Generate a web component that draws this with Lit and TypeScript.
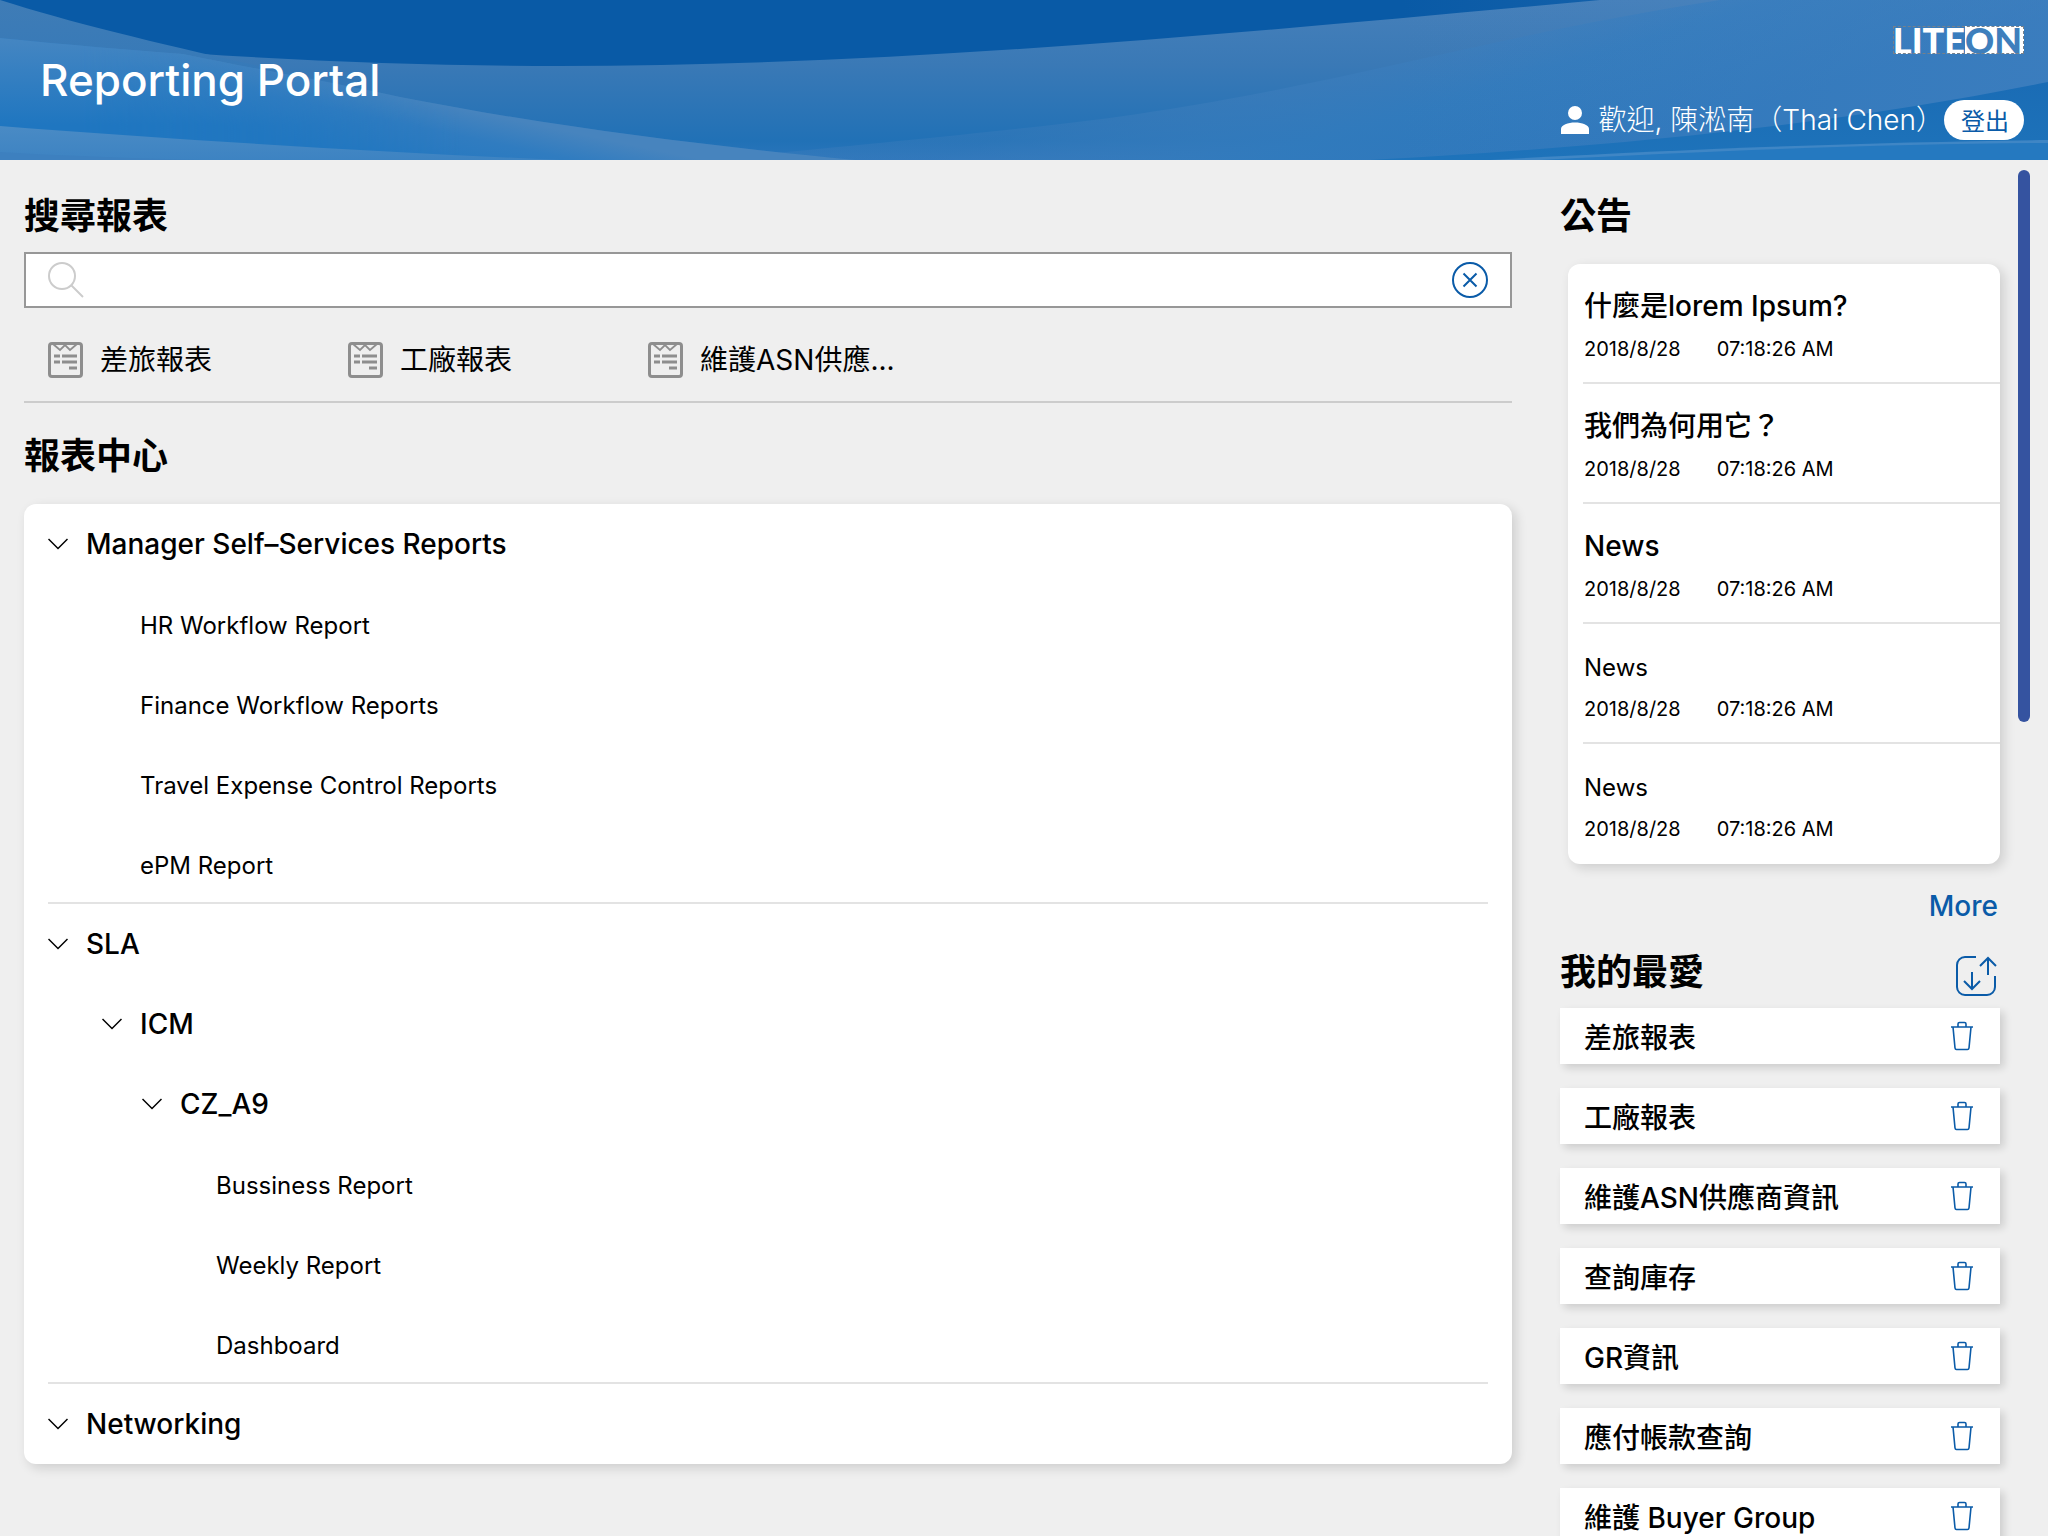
import { LitElement, css, html, nothing, svg } from "lit";
import { customElement, state } from "lit/decorators.js";

interface ReportNode {
  name: string;
  children?: ReportNode[];
}

interface Announcement {
  title: string;
  date: string;
  time: string;
  unread: boolean;
}

const SHORTCUTS = ["差旅報表", "工廠報表", "維護ASN供應..."];

const REPORTS: ReportNode[] = [
  {
    name: "Manager Self–Services Reports",
    children: [
      { name: "HR Workflow Report" },
      { name: "Finance Workflow Reports" },
      { name: "Travel Expense Control Reports" },
      { name: "ePM Report" },
    ],
  },
  {
    name: "SLA",
    children: [
      {
        name: "ICM",
        children: [
          {
            name: "CZ_A9",
            children: [{ name: "Bussiness Report" }, { name: "Weekly Report" }, { name: "Dashboard" }],
          },
        ],
      },
    ],
  },
  { name: "Networking", children: [] },
];

const stamp = { date: "2018/8/28", time: "07:18:26 AM" };

const ANNOUNCEMENTS: Announcement[] = [
  { title: "什麼是lorem Ipsum?", ...stamp, unread: true },
  { title: "我們為何用它？", ...stamp, unread: true },
  { title: "News", ...stamp, unread: true },
  { title: "News", ...stamp, unread: false },
  { title: "News", ...stamp, unread: false },
];

const FAVORITES = [
  "差旅報表",
  "工廠報表",
  "維護ASN供應商資訊",
  "查詢庫存",
  "GR資訊",
  "應付帳款查詢",
  "維護 Buyer Group",
];

const waves = html`
  <svg class="waves" viewBox="0 0 2048 160" preserveAspectRatio="none" aria-hidden="true">
    <defs>
      <linearGradient id="mid" x1="0" y1="0" x2="0" y2="1">
        <stop offset="0" stop-color="#4680ba" />
        <stop offset="0.4" stop-color="#3a79b6" />
        <stop offset="0.88" stop-color="#2171b6" />
        <stop offset="1" stop-color="#2a75bb" />
      </linearGradient>
      <linearGradient id="wash" gradientUnits="userSpaceOnUse" x1="1500" y1="-20" x2="1560" y2="170">
        <stop offset="0" stop-color="#4580bd" stop-opacity="0.3" />
        <stop offset="0.5" stop-color="#327bbd" stop-opacity="0.9" />
        <stop offset="1" stop-color="#2d77bc" />
      </linearGradient>
      <linearGradient id="glow" x1="0" y1="0" x2="1" y2="0">
        <stop offset="0" stop-color="#4b84c0" stop-opacity="0" />
        <stop offset="1" stop-color="#4b84c0" stop-opacity="0.75" />
      </linearGradient>
      <linearGradient id="corner" x1="0" y1="0" x2="0" y2="1">
        <stop offset="0" stop-color="#3f7cb6" />
        <stop offset="1" stop-color="#2a76bb" />
      </linearGradient>
      <linearGradient id="sweep" gradientUnits="userSpaceOnUse" x1="440" y1="104" x2="426" y2="170">
        <stop offset="0" stop-color="#4784be" />
        <stop offset="0.4" stop-color="#307cc0" />
        <stop offset="1" stop-color="#2378c1" />
      </linearGradient>
      <linearGradient id="veil" gradientUnits="userSpaceOnUse" x1="0" y1="38" x2="0" y2="125">
        <stop offset="0" stop-color="#4586c2" />
        <stop offset="1" stop-color="#1f76c0" />
      </linearGradient>
      <linearGradient id="fade" gradientUnits="userSpaceOnUse" x1="80" y1="0" x2="460" y2="0">
        <stop offset="0" stop-color="#fff" />
        <stop offset="1" stop-color="#000" />
      </linearGradient>
      <mask id="fade-mask" maskUnits="userSpaceOnUse" x="0" y="0" width="2048" height="160">
        <rect width="2048" height="160" fill="url(#fade)" />
      </mask>
      <linearGradient id="base" gradientUnits="userSpaceOnUse" x1="0" y1="125" x2="0" y2="160">
        <stop offset="0" stop-color="#4a8bc5" />
        <stop offset="1" stop-color="#3d83c2" />
      </linearGradient>
      <linearGradient id="deep" x1="0" y1="0" x2="0" y2="1">
        <stop offset="0" stop-color="#1a6cb5" />
        <stop offset="1" stop-color="#1e73ba" />
      </linearGradient>
    </defs>
    <rect width="2048" height="160" fill="#095aa6" />
    <path d="M0 38C180 55 370 66 560 66C900 66 1250 32 1600 0H2048V160H0Z" fill="url(#mid)" />
    <path d="M1024 128C1300 100 1460 40 1720 0H2048V160H700C830 148 930 138 1024 128Z" fill="url(#wash)" />
    <path d="M1400 0H2048V160H1400Z" fill="url(#glow)" opacity="0.6" />
    <path d="M0 0C100 32 240 62 400 97C560 128 700 145 855 160H0Z" fill="url(#corner)" />
    <path d="M0 38C70 45 130 50 183 54C250 68 320 80 400 97C560 128 700 145 855 160H0Z" fill="url(#sweep)" />
    <path
      d="M0 38C70 45 130 50 183 54C250 68 320 80 400 97C560 128 700 145 855 160H0Z"
      fill="url(#veil)"
      mask="url(#fade-mask)"
    />
    <path d="M0 126C180 140 380 152 560 160H0Z" fill="url(#base)" />
    <path d="M0 152C70 156 130 158 200 160H0Z" fill="#3d80bf" />
    <path d="M1370 160C1650 145 1860 120 2048 82V160Z" fill="url(#deep)" />
    <path d="M1490 160C1700 148 1880 142 2048 140V160Z" fill="#3f86c5" />
    <path d="M1540 160C1740 149 1900 144 2048 143V160Z" fill="#2579c0" />
  </svg>
`;

const icon = (name: string, width: number, height: number, body: unknown) => html`
  <svg class="icon ${name}" width=${width} height=${height} viewBox="0 0 ${width} ${height}" aria-hidden="true">${body}</svg>
`;

const personIcon = icon(
  "person",
  28,
  28,
  svg`<circle cx="14" cy="7" r="7" /><path d="M0 28V23C0 19 7 16.500 14 16.500S28 19 28 23V28Z" />`,
);

const searchIcon = icon("search", 36, 36, svg`<circle cx="14" cy="14" r="13" /><path d="M23.500 23.500L35 35" />`);

const clearIcon = icon("clear", 36, 36, svg`<circle cx="18" cy="18" r="17" /><path d="M11.500 11.500L24.500 24.500M24.500 11.500L11.500 24.500" />`);

const reportIcon = icon(
  "report",
  36,
  36,
  svg`<rect x="1.500" y="1.500" width="32" height="33" rx="2.500" stroke-width="3" />
    <path d="M5 2L12 8L17 3L22 8L29 2" stroke-width="1.800" />
    <path d="M6 14H12M14 14H29M6 20H12M14 20H29M21 26H29" stroke-width="3" />`,
);

const chevronIcon = icon("chevron", 20, 12, svg`<path d="M0.500 1L10 10.500L19.500 1" />`);

const sortIcon = icon(
  "sort",
  42,
  42,
  svg`<path d="M20 2H9A8 8 0 0 0 1 10V32A8 8 0 0 0 9 40H31A8 8 0 0 0 39 32V21" />
    <path d="M16 17V34M8 26L16 34L24 26M32 20V3M24 11L32 3L40 11" />`,
);

const trashIcon = icon(
  "trash",
  24,
  30,
  svg`<path d="M1 6H23M3 6L5 27Q5.200 28.500 6.500 28.500H17.500Q18.800 28.500 19 27L21 6M8 6V3Q8 1.500 9.500 1.500H14.500Q16 1.500 16 3V6" />`,
);

@customElement("app-root")
export class AppRoot extends LitElement {
  static styles = css`
    :host {
      display: block;
      --blue: #0a5ba8;
      --line: #e3e3e3;
      font-family: Inter, "Noto Sans CJK TC", sans-serif;
      color: #000;
      background: #efefef;
    }
    * {
      box-sizing: border-box;
    }
    h1,
    h2,
    p,
    ul {
      margin: 0;
      padding: 0;
    }
    ul {
      list-style: none;
    }
    a {
      color: inherit;
      text-decoration: none;
    }
    button {
      font: inherit;
      color: inherit;
      border: 0;
      padding: 0;
      background: none;
      cursor: pointer;
    }
    .icon {
      display: block;
      flex: none;
      fill: none;
      stroke: currentColor;
      stroke-width: 2;
    }
    .shell {
      display: flex;
      flex-direction: column;
      height: 100vh;
      overflow: hidden;
    }
    .banner {
      position: relative;
      flex: none;
      display: flex;
      justify-content: space-between;
      height: 160px;
      padding: 0 24px 0 40px;
      color: #fff;
    }
    .waves {
      position: absolute;
      inset: 0;
      width: 100%;
      height: 100%;
    }
    .title {
      position: relative;
      align-self: center;
      font-size: 44px;
      font-weight: 500;
      line-height: 60px;
    }
    .account {
      position: relative;
      display: flex;
      flex-direction: column;
      align-items: flex-end;
      justify-content: space-between;
      padding: 26px 0 20px;
    }
    .logo {
      display: flex;
      height: 28px;
      outline: 1px dashed #76808a;
      outline-offset: -1px;
      font-family: Lato, "Liberation Sans", sans-serif;
      font-size: 36px;
      font-weight: 900;
      line-height: 28px;
    }
    .logo-box {
      padding: 0 2px 0 0;
      background: #fff;
      color: #3e7fbc;
    }
    .user {
      display: flex;
      align-items: center;
      font-size: 28px;
      font-weight: 300;
      line-height: 40px;
    }
    .person {
      fill: currentColor;
      stroke: none;
      margin-right: 10px;
    }
    .logout {
      width: 80px;
      height: 40px;
      padding: 2px 0 0 2px;
      border-radius: 20px;
      background: #fff;
      color: var(--blue);
      font-size: 24px;
      font-weight: 400;
    }
    .page {
      flex: 1;
      min-height: 0;
      display: flex;
      padding: 0 18px 0 24px;
    }
    .reports {
      flex: 1;
      min-width: 0;
      padding-top: 31px;
      margin-right: 48px;
    }
    .side {
      flex: none;
      width: 440px;
      padding-top: 31px;
    }
    .thumb {
      flex: none;
      width: 12px;
      height: 552px;
      margin: 10px 0 0 18px;
      border-radius: 6px;
      background: #3553a0;
    }
    .heading {
      font-size: 36px;
      font-weight: 700;
      line-height: 50px;
    }
    .search-box {
      display: flex;
      align-items: center;
      height: 56px;
      margin-top: 11px;
      padding: 0 22px;
      border: 2px solid #979797;
      background: #fff;
    }
    .search {
      color: #ccc;
    }
    .search-input {
      flex: 1;
      min-width: 0;
      height: 100%;
      margin: 0 16px;
      border: 0;
      outline: 0;
      background: none;
      font: inherit;
      font-size: 28px;
    }
    .clear-button {
      color: var(--blue);
    }
    .shortcuts {
      display: flex;
      padding: 30px 24px 19px;
      border-bottom: 2px solid #ccc;
    }
    .shortcut {
      display: flex;
      align-items: center;
      gap: 16px;
      width: 300px;
      font-size: 28px;
      line-height: 44px;
      white-space: nowrap;
    }
    .report {
      color: #8e8e8e;
    }
    .center-heading {
      margin-top: 28px;
    }
    .card {
      border-radius: 12px;
      background: #fff;
      box-shadow: 4px 4px 12px rgba(0, 0, 0, 0.14);
    }
    .tree {
      margin-top: 23px;
      padding: 0 24px;
    }
    .section + .section {
      border-top: 2px solid var(--line);
    }
    .section {
      margin-bottom: -2px;
    }
    .section:last-child {
      margin-bottom: 0;
    }
    .node {
      display: flex;
      align-items: center;
      gap: 18px;
      height: 80px;
      font-size: 28px;
      font-weight: 500;
    }
    .chevron {
      stroke-width: 1.5;
    }
    .closed .chevron {
      transform: rotate(-90deg);
    }
    .leaf {
      display: flex;
      align-items: center;
      height: 80px;
      padding-top: 2px;
      font-size: 24px;
    }
    .level-1 {
      padding-left: 54px;
    }
    .level-2 {
      padding-left: 40px;
    }
    .level-3 {
      padding-left: 36px;
    }
    .level-1 > .leaf-item,
    .level-3 > .leaf-item {
      padding-left: 38px;
    }
    .news {
      margin: 23px 0 0 8px;
      padding-left: 15px;
    }
    .news-item {
      height: 120px;
      padding: 20px 0 0 1px;
      border-bottom: 2px solid var(--line);
    }
    .news-item:last-child {
      border-bottom: 0;
    }
    .news-title {
      display: block;
      padding-top: 2px;
      font-size: 24px;
      line-height: 44px;
    }
    .unread {
      padding-top: 0;
      padding-bottom: 2px;
      font-size: 28px;
      font-weight: 500;
    }
    .news-stamp {
      display: flex;
      gap: 36px;
      font-size: 20px;
      line-height: 38px;
    }
    .more {
      display: block;
      width: fit-content;
      margin: 22px 2px 0 auto;
      color: var(--blue);
      font-size: 28px;
      font-weight: 500;
      line-height: 40px;
    }
    .favorites-head {
      display: flex;
      justify-content: space-between;
      align-items: flex-end;
      height: 50px;
      margin-top: 21px;
    }
    .sort-button {
      color: var(--blue);
      margin-right: 2px;
    }
    .favorites {
      display: flex;
      flex-direction: column;
      gap: 24px;
      margin-top: 11px;
    }
    .favorite {
      display: flex;
      align-items: center;
      justify-content: space-between;
      height: 56px;
      padding: 0 26px 0 24px;
      background: #fff;
      box-shadow: 4px 4px 8px rgba(0, 0, 0, 0.14);
      font-size: 28px;
      font-weight: 500;
    }
    .trash-button {
      color: var(--blue);
    }
    .trash {
      stroke-width: 1.6;
    }
  `;

  @state() private closed: ReadonlySet<string> = new Set();
  @state() private favorites = FAVORITES;
  @state() private query = "";

  private toggle(name: string) {
    const next = new Set(this.closed);
    if (!next.delete(name)) next.add(name);
    this.closed = next;
  }

  private renderNode(node: ReportNode, level: number): unknown {
    if (!node.children) {
      return html`<li class="leaf-item"><a class="leaf" href="#">${node.name}</a></li>`;
    }
    const closed = this.closed.has(node.name);
    return html`
      <li class=${level === 0 ? "section" : "branch"}>
        <button class="node ${closed ? "closed" : ""}" aria-expanded=${!closed} @click=${() => this.toggle(node.name)}>
          ${chevronIcon}<span>${node.name}</span>
        </button>
        ${closed || !node.children.length
          ? nothing
          : html`<ul class="level-${level + 1}">
              ${node.children.map((child) => this.renderNode(child, level + 1))}
            </ul>`}
      </li>
    `;
  }

  render() {
    return html`
      <div class="shell">
        <header class="banner">
          ${waves}
          <h1 class="title">Reporting Portal</h1>
          <div class="account">
            <div class="logo"><span>LITE</span><span class="logo-box">ON</span></div>
            <div class="user">
              ${personIcon}
              <span>歡迎, 陳淞南（Thai Chen）</span>
              <button class="logout">登出</button>
            </div>
          </div>
        </header>
        <div class="page">
          <main class="reports">
            <h2 class="heading"><label for="query">搜尋報表</label></h2>
            <div class="search-box">
              ${searchIcon}
              <input
                class="search-input"
                id="query"
                type="text"
                .value=${this.query}
                @input=${(e: Event) => (this.query = (e.target as HTMLInputElement).value)}
              />
              <button class="clear-button" aria-label="清除" @click=${() => (this.query = "")}>${clearIcon}</button>
            </div>
            <nav class="shortcuts">
              ${SHORTCUTS.map((name) => html`<a class="shortcut" href="#">${reportIcon}<span>${name}</span></a>`)}
            </nav>
            <h2 class="heading center-heading">報表中心</h2>
            <ul class="card tree">
              ${REPORTS.map((node) => this.renderNode(node, 0))}
            </ul>
          </main>
          <aside class="side">
            <h2 class="heading">公告</h2>
            <ul class="card news">
              ${ANNOUNCEMENTS.map(
                (item) => html`
                  <li class="news-item">
                    <a class="news-title ${item.unread ? "unread" : ""}" href="#">${item.title}</a>
                    <p class="news-stamp"><span>${item.date}</span><span>${item.time}</span></p>
                  </li>
                `,
              )}
            </ul>
            <a class="more" href="#">More</a>
            <div class="favorites-head">
              <h2 class="heading">我的最愛</h2>
              <button class="sort-button" aria-label="排序">${sortIcon}</button>
            </div>
            <ul class="favorites">
              ${this.favorites.map(
                (name) => html`
                  <li class="favorite">
                    <a href="#">${name}</a>
                    <button
                      class="trash-button"
                      aria-label="刪除"
                      @click=${() => (this.favorites = this.favorites.filter((other) => other !== name))}
                    >
                      ${trashIcon}
                    </button>
                  </li>
                `,
              )}
            </ul>
          </aside>
          <div class="thumb" aria-hidden="true"></div>
        </div>
      </div>
    `;
  }
}
